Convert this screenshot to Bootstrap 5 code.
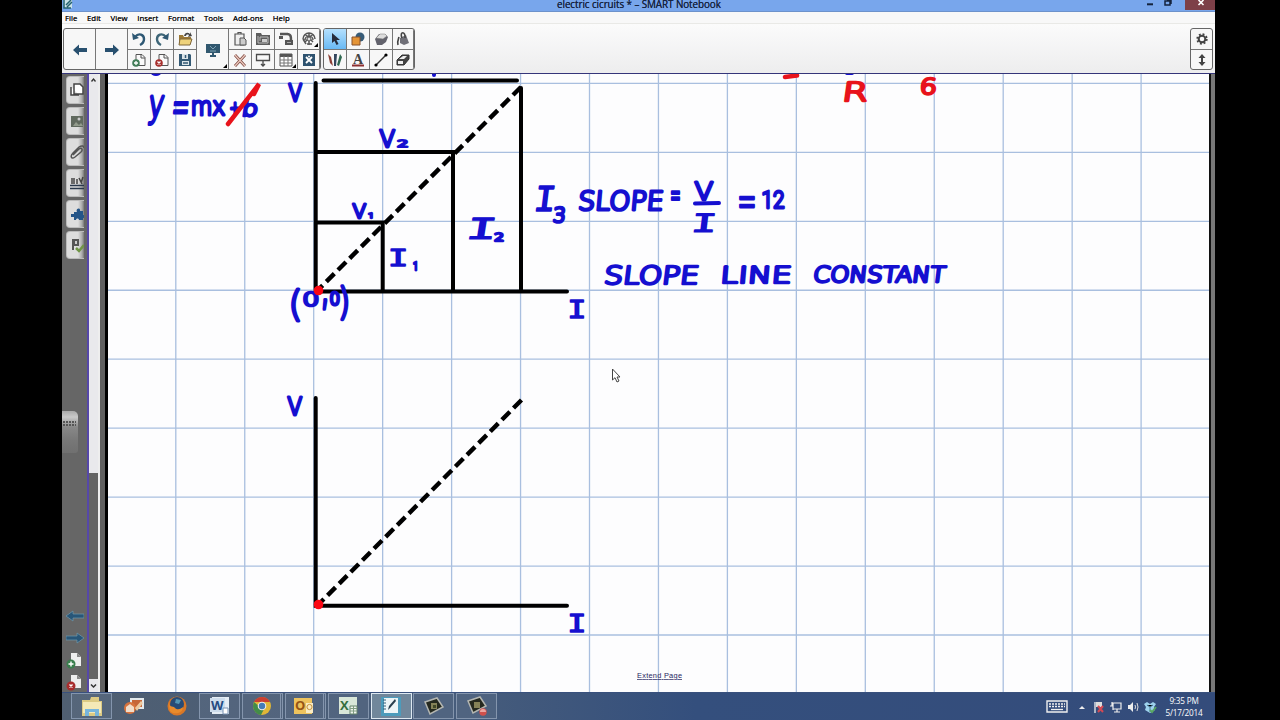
<!DOCTYPE html>
<html lang="en">
<head>
    <meta charset="UTF-8">
    <meta name="viewport" content="width=device-width, initial-scale=1.0">
    <title>SMART Notebook</title>
    <link rel="stylesheet" href="https://cdn.jsdelivr.net/npm/bootstrap@5.3.0/dist/css/bootstrap.min.css">
    <style>
        body {
            background: #000;
            font-family: "Open Sans", "Noto Sans", sans-serif;
            height: 720px;
            overflow: hidden;
            padding: 0 65px 0 62px;
        }
        svg { display: block; flex: none; }
        .app-window { height: 720px; }
        .title-strip {
            height: 12px;
            background: #78a6ec;
            border-bottom: 1px solid #6d92cb;
            font-size: 9.9px;
            line-height: 11px;
            color: #16233f;
        }
        .title-text { padding-left: 483px; letter-spacing: -.08px; margin-top: -1px; height: 12px; text-shadow: 0 0 .4px #16233f; }
        .close-box { width: 30px; height: 10px; background: #7d4048; }
        .menu-strip {
            height: 12px;
            background: #f8f8f8;
            border-bottom: 1px solid #e9e9e6;
            font-size: 7.8px;
            line-height: 13px;
            color: #111;
            padding-left: 3px;
            gap: 9.7px;
            text-shadow: 0 0 .4px #111;
        }
        .tool-strip {
            height: 50px;
            background: linear-gradient(#fbfbfb, #ededee);
            border-bottom: 1px solid #35357a;
            padding: 4px 2px 0 1px;
        }
        .tool-box {
            display: grid;
            height: 42px;
            grid-template-rows: 21px 21px;
            border: 1px solid #666;
            border-radius: 3px;
            background: #f7f7f7;
            box-sizing: border-box;
            overflow: hidden;
        }
        .box-main { grid-template-columns: 32px 32px 23px 23px 23px 32px 23px 23px 23px 22px; width: 258px; }
        .box-pens { grid-template-columns: 23px 23px 23px 21px; width: 92px; margin-left: 2px; }
        .box-side { grid-template-columns: 21px; width: 23px; }
        .tool {
            display: flex;
            align-items: center;
            justify-content: center;
            border-right: 1px solid #777;
            border-bottom: 1px solid #777;
            position: relative;
        }
        .tool.tall { grid-row: span 2; }
        .tool.picked { background: linear-gradient(#b5e0fd, #69b9f4); }
        .more::after {
            content: "";
            position: absolute;
            right: 1px;
            bottom: 2px;
            border-left: 4px solid transparent;
            border-bottom: 4px solid #000;
        }
        .side-tabs { width: 25px; background: #666; padding: 2px 0 0 4px; }
        .side-tab {
            width: 18px;
            height: 28px;
            margin-bottom: 3px;
            padding-left: 3px;
            border-radius: 4px 0 0 4px;
            background: linear-gradient(90deg, #ddd 0 11px, #aaa 15px, #777);
            border: 1px solid #bbb;
            border-right: 0;
        }
        .drag-tab {
            width: 16px;
            height: 42px;
            margin: 149px 0 0 -4px;
            border-radius: 0 5px 3px 0;
            background: linear-gradient(#aaa, #c9c9c9 6px, #888 16px, #777 30px, #707070);
        }
        .side-foot { margin-top: auto; gap: 4.500px; }
        .scroll-track { width: 12px; background: #e9e9ec; border-left: 2px solid #5648a8; border-right: 1px solid #eee; }
        .scroll-thumb { height: 206px; background: #646464; margin-top: auto; }
        .edge-left { width: 9px; background: #606060; border-right: 3px solid #000; border-left: 1px solid #eee; }
        .edge-right { width: 6px; background: #777; border-left: 2px solid #111; }
        .work-area { height: 618px; }
        .board { background: #fdfdfe; width: 1099px; }
        .grid-lines line { stroke: #a9bfdf; stroke-width: 1.3; }
        .bars { stroke: #000; stroke-width: 4; stroke-linecap: round; fill: none; }
        .bars .dashed { stroke-width: 4.4; stroke-linecap: butt; stroke-dasharray: 11.3 5.2; }
        .ink { stroke-linejoin: round; stroke-linecap: round; fill: #150fd0; stroke: #150fd0; }
        .ink.red { fill: #e8131b; stroke: #e8131b; }
        .extend { font: 7.4px "Liberation Sans", sans-serif; fill: #262660; text-decoration: underline; }
        .task-strip {
            height: 28px;
            background: linear-gradient(90deg, #505f71, #465c7b 35%, #344f7d 55%, #344c7b);
            border-top: 1px solid #39517d;
            color: #fff;
            padding-left: 9px;
        }
        .task {
            width: 41px;
            height: 26px;
            margin-right: 1.8px;
            border: 1px solid transparent;
            display: flex;
            align-items: center;
            justify-content: center;
        }
        .task.open { border-color: #8495ad; background: #60708a66; }
        .task.stacked { border-right: 3px double #8495ad; }
        .task.current { border-color: #dde8f1; background: #71879b; }
        .tray { gap: 3px; padding-right: 11px; }
        .clock { font-size: 8.2px; line-height: 12px; width: 40px; letter-spacing: -.2px; }
    </style>
</head>
<body>
    <div class="app-window d-flex flex-column">
        <div class="title-strip d-flex">
            <svg width="12" height="10" viewBox="0 0 12 10"><path d="M1 0h9v8H2z" fill="#c9e2e8"/><path d="M2 0v8h7M4 5l5-5M5 7l5-5" stroke="#24616f" fill="none" stroke-width="1.5"/></svg>
            <div class="title-text text-nowrap">electric cicruits * – SMART Notebook</div>
            <svg class="ms-auto" width="38" height="10" viewBox="0 0 38 10"><path d="M0 4.3h6" stroke="#14233d" stroke-width="2"/><path d="M18 1h5v4h-5zM20 0h4v4" stroke="#14233d" stroke-width="1.5" fill="none"/></svg>
            <div class="close-box"><svg width="30" height="10" viewBox="0 0 30 10"><path d="M13.5 0l5 5m0-5l-5 5" stroke="#fff" stroke-width="1.6"/></svg></div>
        </div>
        <div class="menu-strip d-flex">
            <span>File</span><span>Edit</span><span>View</span><span>Insert</span><span>Format</span><span>Tools</span><span>Add-ons</span><span>Help</span>
        </div>
        <div class="tool-strip d-flex">
            <div class="tool-box box-main">
                <div class="tool tall"><svg width="16" height="14" viewBox="0 0 16 14"><path d="M1 7l6-5.5V5h8v4H7v3.500z" fill="#28506f"/></svg></div>
                <div class="tool tall"><svg width="16" height="14" viewBox="0 0 16 14"><path d="M15 7L9 1.500V5H1v4h8v3.500z" fill="#28506f"/></svg></div>
                <div class="tool"><svg width="16" height="16" viewBox="0 0 16 16"><path d="M4 6c4-5 9-2 9 2 0 3-2 5-4 6" stroke="#2e5874" stroke-width="2.400" fill="none"/><path d="M1 2l1 7 6-2z" fill="#2e5874"/></svg></div>
                <div class="tool"><svg width="16" height="16" viewBox="0 0 16 16"><path d="M12 6c-4-5-9-2-9 2 0 3 2 5 4 6" stroke="#3e6678" stroke-width="2.400" fill="none"/><path d="M15 2l-1 7-6-2z" fill="#2e5874"/></svg></div>
                <div class="tool"><svg width="16" height="16" viewBox="0 0 16 16"><path d="M2 13V4h4l1 2h7v7z" fill="#9b7835"/><path d="M2 14l1-6h12l-2 6z" fill="#eed27b" stroke="#80683b"/><path d="M7 5c1-4 4-4 6-2V1l2 4-4 1 1-2c-2-1-3 0-3 1z" fill="#444"/></svg></div>
                <div class="tool tall more"><svg width="16" height="16" viewBox="0 0 16 16"><path d="M1 2h14v9H1zM7 11h2v3H7zM5 13h6v2H5z" fill="#31586f"/><path d="M5 4l3 3 3-3M5 9h6" stroke="#7fa3b5" fill="none"/></svg></div>
                <div class="tool"><svg width="16" height="16" viewBox="0 0 16 16"><path d="M3 3h9v11H3zM6 3V1.500h3V3" fill="#eee" stroke="#555" stroke-width="1.200"/><path d="M8 7h4l2 2v5H8z" fill="#ccc" stroke="#555"/></svg></div>
                <div class="tool"><svg width="16" height="16" viewBox="0 0 16 16"><path d="M1 2h5l1 2h8v10H1z" fill="#5d5d5d"/><path d="M3 5v7h10V6H5v4" stroke="#bbb" fill="none"/><path d="M7 8h5v3H7z" fill="#ccc"/></svg></div>
                <div class="tool"><svg width="16" height="16" viewBox="0 0 16 16"><path d="M2 3h8M9 3c4 0 4 3 4 6" stroke="#555" stroke-width="2.500" fill="none"/><path d="M1 5h4v3H1zM7 9h8v5H7z" fill="#555"/><path d="M9 11h4v1H9z" fill="#aaa"/></svg></div>
                <div class="tool more"><svg width="18" height="18" viewBox="0 0 18 18"><path d="M3 9a6 6 0 0 1 12 0M5 10a4 4 0 0 1 8 0M3 9l3 5M9 3v12M5 4l8 8M13 4l-8 8M7 14h5" stroke="#555" stroke-width="1.500" fill="none"/><circle cx="9" cy="9" r="2" fill="#ddd" stroke="#555"/></svg></div>
                <!-- second row -->
                <div class="tool"><svg width="16" height="16" viewBox="0 0 16 16"><path d="M5 13.500V2.500h6l3 3v8zM10 2v4h4" fill="#fafafa" stroke="#555"/><circle cx="5" cy="11" r="3.800" fill="#427d59"/><path d="M3 11h4M5 9v4" stroke="#fff" stroke-width="1.300"/></svg></div>
                <div class="tool"><svg width="16" height="16" viewBox="0 0 16 16"><path d="M5 13.500V2.500h6l3 3v8zM10 2v4h4" fill="#fafafa" stroke="#555"/><circle cx="5" cy="11" r="3.800" fill="#a72f2d"/><path d="M3.500 9.500l3 3m0-3l-3 3" stroke="#fff" stroke-width="1.300"/></svg></div>
                <div class="tool"><svg width="16" height="16" viewBox="0 0 16 16"><path d="M2 2h11l1 1v11H2z" fill="#345a75"/><path d="M5 2h6v5H5zM5 9h7v4H5z" fill="#dce5e9"/><path d="M8.500 3v3M6 11h5" stroke="#345a75" stroke-width="1.500"/></svg></div>
                <div class="tool"><svg width="16" height="16" viewBox="0 0 16 16"><path d="M3 3l10 11M13 3L3 14" stroke="#7f4a43" stroke-width="2.800"/><path d="M3 3l10 11M13 3L3 14" stroke="#eac7bb" stroke-width="1.300"/></svg></div>
                <div class="tool"><svg width="16" height="16" viewBox="0 0 16 16"><path d="M1.500 2.500h13v6h-13zM8 9v5M6 12l2 2 2-2" stroke="#4b4b4b" stroke-width="1.300" fill="none"/></svg></div>
                <div class="tool more"><svg width="16" height="16" viewBox="0 0 16 16"><path d="M2 2h12v12H2z" fill="#fff" stroke="#555"/><path d="M2 3.500h12" stroke="#555" stroke-width="3"/><path d="M2 8h12M2 11h12M6 4v10M10 4v10" stroke="#777"/></svg></div>
                <div class="tool"><svg width="16" height="16" viewBox="0 0 16 16"><path d="M2 2h12v12H2z" fill="#2d526f"/><path d="M5 5l6 6m0-6l-6 6" stroke="#fff" stroke-width="1.800"/><circle cx="8" cy="4.500" r="1" fill="#fff"/></svg></div>
            </div>
            <div class="tool-box box-pens">
                <div class="tool picked"><svg width="16" height="16" viewBox="0 0 16 16"><path d="M5 2v10l2.500-2 2 4 2-1-2-4H13z" fill="#262b3a"/></svg></div>
                <div class="tool"><svg width="16" height="16" viewBox="0 0 16 16"><circle cx="10" cy="6" r="4.500" fill="#375c78"/><path d="M2 6h8v8H2z" fill="#e49436" stroke="#87512a"/></svg></div>
                <div class="tool"><svg width="16" height="16" viewBox="0 0 16 16"><path d="M2 8l4-5h6l3 3-2 5-4 3H4z" fill="#62626c"/><path d="M3 7l4-4h5l2 2-4 3z" fill="#ddd" stroke="#777" stroke-width=".500"/></svg></div>
                <div class="tool"><svg width="16" height="16" viewBox="0 0 16 16"><path d="M5 7l6-3 3 8-5 2-4-2z" fill="#707078"/><path d="M7 7c-3-7 4-7 3 0M4 6c-1 3-2 5-1 8" stroke="#444" stroke-width="1.600" fill="none"/></svg></div>
                <div class="tool"><svg width="16" height="16" viewBox="0 0 16 16"><path d="M1 2l3 3 2 9-3-3z" fill="#8b4036"/><path d="M7 2h3l-1 12H7z" fill="#33465d"/><path d="M13 2l2 3-3 9-2-1z" fill="#2f6951"/></svg></div>
                <div class="tool"><svg width="16" height="16" viewBox="0 0 16 16"><text x="8" y="12" text-anchor="middle" font-family="Liberation Serif" font-size="14" font-weight="bold" fill="#444">A</text><path d="M2 13.500h12" stroke="#8d3030" stroke-width="1.800"/></svg></div>
                <div class="tool"><svg width="16" height="16" viewBox="0 0 16 16"><path d="M3 13L13 3" stroke="#333" stroke-width="1.500"/><circle cx="3" cy="13" r="1.600"/><circle cx="13" cy="3" r="1.600"/></svg></div>
                <div class="tool"><svg width="16" height="16" viewBox="0 0 16 16"><path d="M2 8l5-5h7v4l-5 6H2z" fill="#444" stroke="#333"/><path d="M4 7l4-3h4L9 7zM3 9h5v3H3z" fill="#eee"/></svg></div>
            </div>
            <div class="tool-box box-side ms-auto">
                <div class="tool border-end-0"><svg width="14" height="14" viewBox="0 0 14 14"><circle cx="7" cy="7" r="3.300" fill="none" stroke="#444" stroke-width="2"/><circle cx="7" cy="7" r="4.800" fill="none" stroke="#444" stroke-width="1.800" stroke-dasharray="1.900 1.870"/></svg></div>
                <div class="tool border-end-0"><svg width="14" height="14" viewBox="0 0 14 14"><path d="M7 1l3.500 4H8v4h2.500L7 13 3.500 9H6V5H3.500z" fill="#444"/></svg></div>
            </div>
        </div>
        <div class="work-area d-flex">
            <div class="side-tabs d-flex flex-column">
                <div class="side-tab d-flex align-items-center"><svg width="14" height="16" viewBox="0 0 14 16"><path d="M1 5v8h8M4 2h6l3 3v7H4z" fill="#fff" stroke="#444" stroke-width="1.500"/></svg></div>
                <div class="side-tab d-flex align-items-center"><svg width="14" height="16" viewBox="0 0 14 16"><path d="M1 3h12v11H1z" fill="#60695e"/><circle cx="9" cy="6" r="1.500" fill="#ccc"/><path d="M3 13l3-4 3 3 2-2 2 3z" fill="#929b8c"/></svg></div>
                <div class="side-tab d-flex align-items-center"><svg width="14" height="16" viewBox="0 0 14 16"><path d="M3 11l6-6c3-2 4 1 2 3l-6 5c-4 3-5-1-2-4l6-6c3-2 5-1 5 1" stroke="#555" stroke-width="1.500" fill="none"/></svg></div>
                <div class="side-tab d-flex align-items-center"><svg width="14" height="16" viewBox="0 0 14 16"><path d="M2 3v6M4 3v6M7 4v5M9 3l3 6m1-7l-2 6" stroke="#444" stroke-width="1.500"/><path d="M0 10.500h14M0 13.500h14" stroke="#29384c" stroke-width="1.300"/></svg></div>
                <div class="side-tab d-flex align-items-center"><svg width="14" height="16" viewBox="0 0 14 16"><path d="M1 8h3V6h3c-2-4 4-5 3-1h3v4c3 0 2 3 0 3v2H9c0-2-3-2-3 0H4v-3H1z" fill="#245588"/></svg></div>
                <div class="side-tab d-flex align-items-center"><svg width="14" height="16" viewBox="0 0 14 16"><path d="M2 2h7v7H4v4H2z" fill="#555"/><path d="M5 4h2v3H5z" fill="#ccc"/><path d="M6 11l3 3 5-6" stroke="#6f9546" stroke-width="2.500" fill="none"/></svg></div>
                <div class="drag-tab"><svg width="16" height="24" viewBox="0 0 16 24"><path d="M1 11h13M1 14h13" stroke="#555" stroke-width="2" stroke-dasharray="2 1"/></svg></div>
                <div class="side-foot d-flex flex-column">
                    <svg width="18" height="18" viewBox="0 0 18 18"><path d="M0 9l7-5v3h11v4H7v3z" fill="#285678" stroke="#6d98ae" stroke-width=".700"/></svg>
                    <svg width="18" height="18" viewBox="0 0 18 18"><path d="M18 9l-7-5v3H0v4h11v3z" fill="#285678" stroke="#6d98ae" stroke-width=".700"/></svg>
                    <svg width="18" height="18" viewBox="0 0 18 18"><path d="M5 1h6l4 4v9H5z" fill="#eee"/><path d="M11 1v4h4" fill="#888"/><circle cx="5" cy="12" r="4.500" fill="#397e4d"/><path d="M2.500 12h5M5 9.500v5" stroke="#fff" stroke-width="1.400"/></svg>
                    <svg width="18" height="18" viewBox="0 0 18 18"><path d="M5 1h6l4 4v9H5z" fill="#eee"/><path d="M11 1v4h4" fill="#888"/><circle cx="5" cy="12" r="4.500" fill="#a82c2c"/><path d="M3.500 10.500l3 3m0-3l-3 3" stroke="#fff" stroke-width="1.400"/></svg>
                </div>
            </div>
            <div class="scroll-track d-flex flex-column">
                <svg width="9" height="14" viewBox="0 0 9 14"><path d="M2.500 7.500l2-2.500 2 2.500" stroke="#333" stroke-width="1.300" fill="none"/></svg>
                <div class="scroll-thumb"></div>
                <svg width="9" height="13" viewBox="0 0 9 13"><path d="M2 5.500L4.500 8 7 5.500" stroke="#333" stroke-width="1.500" fill="none"/></svg>
            </div>
            <div class="edge-left"></div>
            <!-- the drawing uses window coordinates -->
            <svg class="board flex-grow-1" height="618" viewBox="108 74 1101 618" preserveAspectRatio="none">
                <g class="grid-lines" id="gridLines"></g>
                <g class="bars">
                    <path d="M315.700 83V291.500H567M323.500 80.500H517M317 152H453V290M317 222.500H382.700V290M521 88V290"/>
                    <path class="dashed" d="M521 87L318 290"/>
                    <path d="M315.700 398V605.800H567"/>
                    <path class="dashed" d="M521.500 400L319 604"/>
                </g>
                <g id="writing"></g>
                <g stroke="#150fd0" stroke-width="4" stroke-linecap="round" fill="none">
                    <path d="M695 203.500L719 203"/>
                    <path d="M153 73q3 2 6 0M434 73v2M847 73h5"/>
                </g>
                <g stroke="#e8131b" stroke-width="4.500" stroke-linecap="round" fill="none">
                    <path d="M228 124L259 84L254 94"/>
                    <path d="M785 77L797 75.500"/>
                </g>
                <circle cx="318.500" cy="290.500" r="4.800" fill="#fb0714"/>
                <circle cx="318.500" cy="604.500" r="4.800" fill="#fb0714"/>
                <path d="M612.500 369v11l2.500-2.300 2 4.300 2-1-2-4h3z" fill="#fff" stroke="#444"/>
                <text class="extend" x="637" y="678" textLength="45">Extend Page</text>
            </svg>
            <div class="edge-right"></div>
        </div>
        <div class="task-strip d-flex">
            <div class="task open"><svg width="26" height="22" viewBox="0 0 26 22"><path d="M3 5h8l1-3h8v4h3v15H3z" fill="#dcca83"/><path d="M4 7h18v11H4z" fill="#f4e9b7"/><path d="M6 21v-7h14v7h-4v-4h-6v4z" fill="#77b5dc"/></svg></div>
            <div class="task"><svg width="24" height="20" viewBox="0 0 24 20"><path d="M8 2h14v11H8z" fill="#e3e9ed"/><path d="M10 4h10v7H10z" fill="#c66638"/><circle cx="8" cy="12" r="6" fill="#d8733d"/><path d="M4 11l4-3 4 3v5H4z" fill="#f1ddca"/><path d="M13 12l6-7 2 2-6 8z" fill="#edc9a0"/></svg></div>
            <div class="task"><svg width="22" height="22" viewBox="0 0 22 22"><circle cx="11" cy="11" r="9.500" fill="#d97726"/><circle cx="11" cy="9" r="7" fill="#274b76"/><path d="M2 6c1 6 3 5 6 6 3 4 7 2 9 0 0 7-10 8-13 4z" fill="#e88b2c"/><path d="M10 4l5 1-2 4-4-1z" fill="#5295b4"/></svg></div>
            <div class="task open"><svg width="22" height="20" viewBox="0 0 22 20"><path d="M3 1h17v17H3z" fill="#e5edf5"/><path d="M1 2h15v14H1z" fill="#cddcec"/><text x="2" y="14" font-size="13" font-weight="bold" fill="#254a80">W</text><path d="M14 12h5v6h-5z" fill="#fff" stroke="#7893b4"/></svg></div>
            <div class="task open stacked"><svg width="22" height="22" viewBox="0 0 22 22"><circle cx="11" cy="11" r="9" fill="#dfb638"/><path d="M3 7a9 9 0 0 1 16 0h-8z" fill="#ca3f31"/><path d="M3 7a9 9 0 0 0 7 13l3-6-4-2z" fill="#438c49"/><circle cx="11" cy="11" r="4.300" fill="#eee"/><circle cx="11" cy="11" r="3.200" fill="#447cb8"/></svg></div>
            <div class="task open stacked"><svg width="22" height="20" viewBox="0 0 22 20"><path d="M1 2h18v16H1z" fill="#eec35d"/><text x="2" y="14" font-size="13" font-weight="bold" fill="#965415">O</text><path d="M13 7h7v10h-7z" fill="#f9ebc4"/><circle cx="16.500" cy="11" r="2.600" fill="none" stroke="#c28f38"/></svg></div>
            <div class="task open"><svg width="22" height="20" viewBox="0 0 22 20"><path d="M2 1h18v17H2z" fill="#d9e7d9"/><text x="3" y="14" font-size="13" font-weight="bold" fill="#346e3e">X</text><path d="M13 10h7v8h-7z" fill="#eff5ed" stroke="#65846a"/><path d="M13 12.500h7M13 15h7M16.500 10v8" stroke="#819d82"/></svg></div>
            <div class="task current"><svg width="24" height="22" viewBox="0 0 24 22"><path d="M2 2h20v19H2z" fill="#4c9bbb"/><path d="M5 3h14v15H5z" fill="#edf5f7"/><path d="M9 15l1-4 6-7 1 2-6 7z" fill="#293f4e"/><path d="M4 5h3M4 8h3M4 11h3M4 14h3" stroke="#345f78"/></svg></div>
            <div class="task open"><svg width="22" height="20" viewBox="0 0 22 20"><path d="M2 6l12-4 6 9-13 7z" fill="#25291f" stroke="#b4b6b1" stroke-width="1.500"/><path d="M8 7h6v6H8z" fill="#858258"/><path d="M10 9h3v3h-3z" fill="#414827"/></svg></div>
            <div class="task open"><svg width="22" height="22" viewBox="0 0 22 22"><path d="M2 6l12-4 6 9-13 7z" fill="#25291f" stroke="#b4b6b1" stroke-width="1.500"/><path d="M8 7h6v6H8z" fill="#858258"/><circle cx="17" cy="17" r="3.700" fill="#cf504c"/><path d="M14 17a3 3 0 0 1 6 0z" fill="#e9a5a0"/></svg></div>
            <div class="tray ms-auto d-flex align-items-center">
                <svg width="22" height="15" viewBox="0 0 22 15"><path d="M1 2h20v11H1z" fill="none" stroke="#eee" stroke-width="1.400"/><path d="M3 5h16M3 7.500h16" stroke="#eee" stroke-width="1.500" stroke-dasharray="2 1"/><path d="M5 10.500h12" stroke="#eee" stroke-width="1.300"/></svg>
                <svg width="18" height="12" viewBox="0 0 18 12"><path d="M8 8l3-3 3 3z" fill="#eee"/></svg>
                <svg width="14" height="14" viewBox="0 0 14 14"><path d="M3 2v11" stroke="#eee" stroke-width="1.300"/><path d="M4 2h6v5H4z" fill="#ddd"/><path d="M6 6l5 6m0-6l-5 6" stroke="#d34954" stroke-width="2"/></svg>
                <svg width="14" height="14" viewBox="0 0 14 14"><path d="M4 3h8v6H4zM8 9v3M5 12h6M3 2v4M1 6h3v4" stroke="#eee" stroke-width="1.200" fill="none"/></svg>
                <svg width="14" height="14" viewBox="0 0 14 14"><path d="M2 5h2l3-3v10L4 9H2z" fill="#eee"/><path d="M9 5q1 2 0 4M11 3q2 4 0 8" stroke="#ddd" fill="none"/></svg>
                <svg width="14" height="14" viewBox="0 0 14 14"><path d="M1 4l3-2 3 2 3-2 3 2-2 3 1 3-5 3-5-3 1-3z" fill="#9ed2ed"/><path d="M4 5l3 2 3-2M7 7v5" stroke="#467a9d"/><path d="M7 10l2 2 4-5" stroke="#58a763" stroke-width="2" fill="none"/></svg>
                <div class="clock text-center ms-1">9:35 PM<br>5/17/2014</div>
            </div>
        </div>
    </div>
    <script src="https://cdn.jsdelivr.net/npm/bootstrap@5.3.0/dist/js/bootstrap.bundle.min.js"></script>
    <script>
        const svgNs = 'http://www.w3.org/2000/svg';

        function addLine(x1, y1, x2, y2) {
            const line = document.createElementNS(svgNs, 'line');
            Object.entries({ x1, y1, x2, y2 }).forEach(([k, v]) => line.setAttribute(k, v));
            document.getElementById('gridLines').appendChild(line);
        }
        for (let i = 0; i < 15; i++) addLine(175.8 + i * 68.95, 73, 175.8 + i * 68.95, 692);
        for (let i = 0; i < 9; i++) addLine(108, 83.4 + i * 68.95, 1209, 83.4 + i * 68.95);

        // [text, left, top, right, bottom, skew, colour]
        const notes = [
            ['y', 147, 94, 163, 126, -6], ['=', 171, 101, 188, 115, -5], ['mx', 191, 99, 226, 116, 0],
            ['+', 229, 101, 241, 115, 0], ['b', 242, 98, 257, 117, -8],
            ['V', 287, 81, 303, 102, 0], ['V', 378, 127, 396, 148, 0], ['2', 396, 138, 409, 148, 0],
            ['V', 351, 201, 367, 219, 0], ['1', 367, 210, 373, 219, 0],
            ['I', 390, 249, 406, 267, 0], ['1', 412, 261, 418, 271, 0],
            ['I', 468, 216, 493, 240, -9], ['2', 493, 231, 505, 242, 0],
            ['I', 535, 184, 553, 212, -7], ['3', 552, 206, 565, 223, -5],
            ['SLOPE', 578, 188, 663, 211, -5], ['=', 670, 191, 681, 201, 0],
            ['V', 693, 179, 714, 201, 0], ['I', 693, 212, 714, 233, -7],
            ['=', 738, 196, 756, 209, 0], ['12', 762, 189, 785, 209, 0],
            ['SLOPE', 604, 263, 698, 285, -7], ['LINE', 721, 264, 791, 284, -5], ['CONSTANT', 812, 264, 946, 283, -7],
            ['I', 569, 298, 585, 319, 0], ['(', 290, 287, 301, 323, 0], ['0', 302, 289, 319, 307, 0],
            [',', 321, 297, 328, 310, 0], ['0', 329, 290, 341, 306, 0], [')', 339, 284, 349, 321, 0],
            ['V', 286, 394, 303, 416, 0], ['I', 569, 612, 585, 633, 0],
            ['R', 844, 79, 867, 102, -8, 'red'], ['6', 920, 76, 936, 95, -4, 'red']
        ];
        const pen = document.createElement('canvas').getContext('2d');

        // font and pen width per letter shape, so the strokes come out about equally heavy
        function shapeOf(text) {
            if (text === 'I') return ['"DejaVu Sans Mono"', 400, 1.6];
            if (text[0] === '1') return ['Roboto', 300, 2.6];
            if (text === '=') return ['"DejaVu Sans"', 200, 2];
            return ['"DejaVu Sans"', 200, 3];
        }

        // stretch each note over its own box, with room left for the pen width
        notes.forEach(([text, left, top, right, bottom, skew, colour]) => {
            const [family, weight, thick] = shapeOf(text);
            let size = 20;
            pen.font = `${weight} ${size}px ${family}, sans-serif`;
            let m = pen.measureText(text);
            size *= (bottom - top - thick) / (m.actualBoundingBoxAscent + m.actualBoundingBoxDescent);
            size = Math.min(size, 26);
            pen.font = `${weight} ${size}px ${family}, sans-serif`;
            m = pen.measureText(text);
            const sx = (right - left - thick) / (m.actualBoundingBoxLeft + m.actualBoundingBoxRight);
            const sy = (bottom - top - thick) / (m.actualBoundingBoxAscent + m.actualBoundingBoxDescent);
            const t = document.createElementNS(svgNs, 'text');
            t.textContent = text;
            t.setAttribute('class', 'ink ' + (colour || ''));
            t.setAttribute('font-family', family + ', sans-serif');
            t.setAttribute('font-size', size);
            t.setAttribute('font-weight', weight);
            t.setAttribute('stroke-width', thick / Math.sqrt(sx * sy));
            const x = left + thick / 2 + m.actualBoundingBoxLeft * sx;
            const y = bottom - thick / 2 - m.actualBoundingBoxDescent * sy;
            t.setAttribute('transform', `translate(${x} ${y}) skewX(${skew}) scale(${sx} ${sy})`);
            document.getElementById('writing').appendChild(t);
        });
    </script>
</body>
</html>
